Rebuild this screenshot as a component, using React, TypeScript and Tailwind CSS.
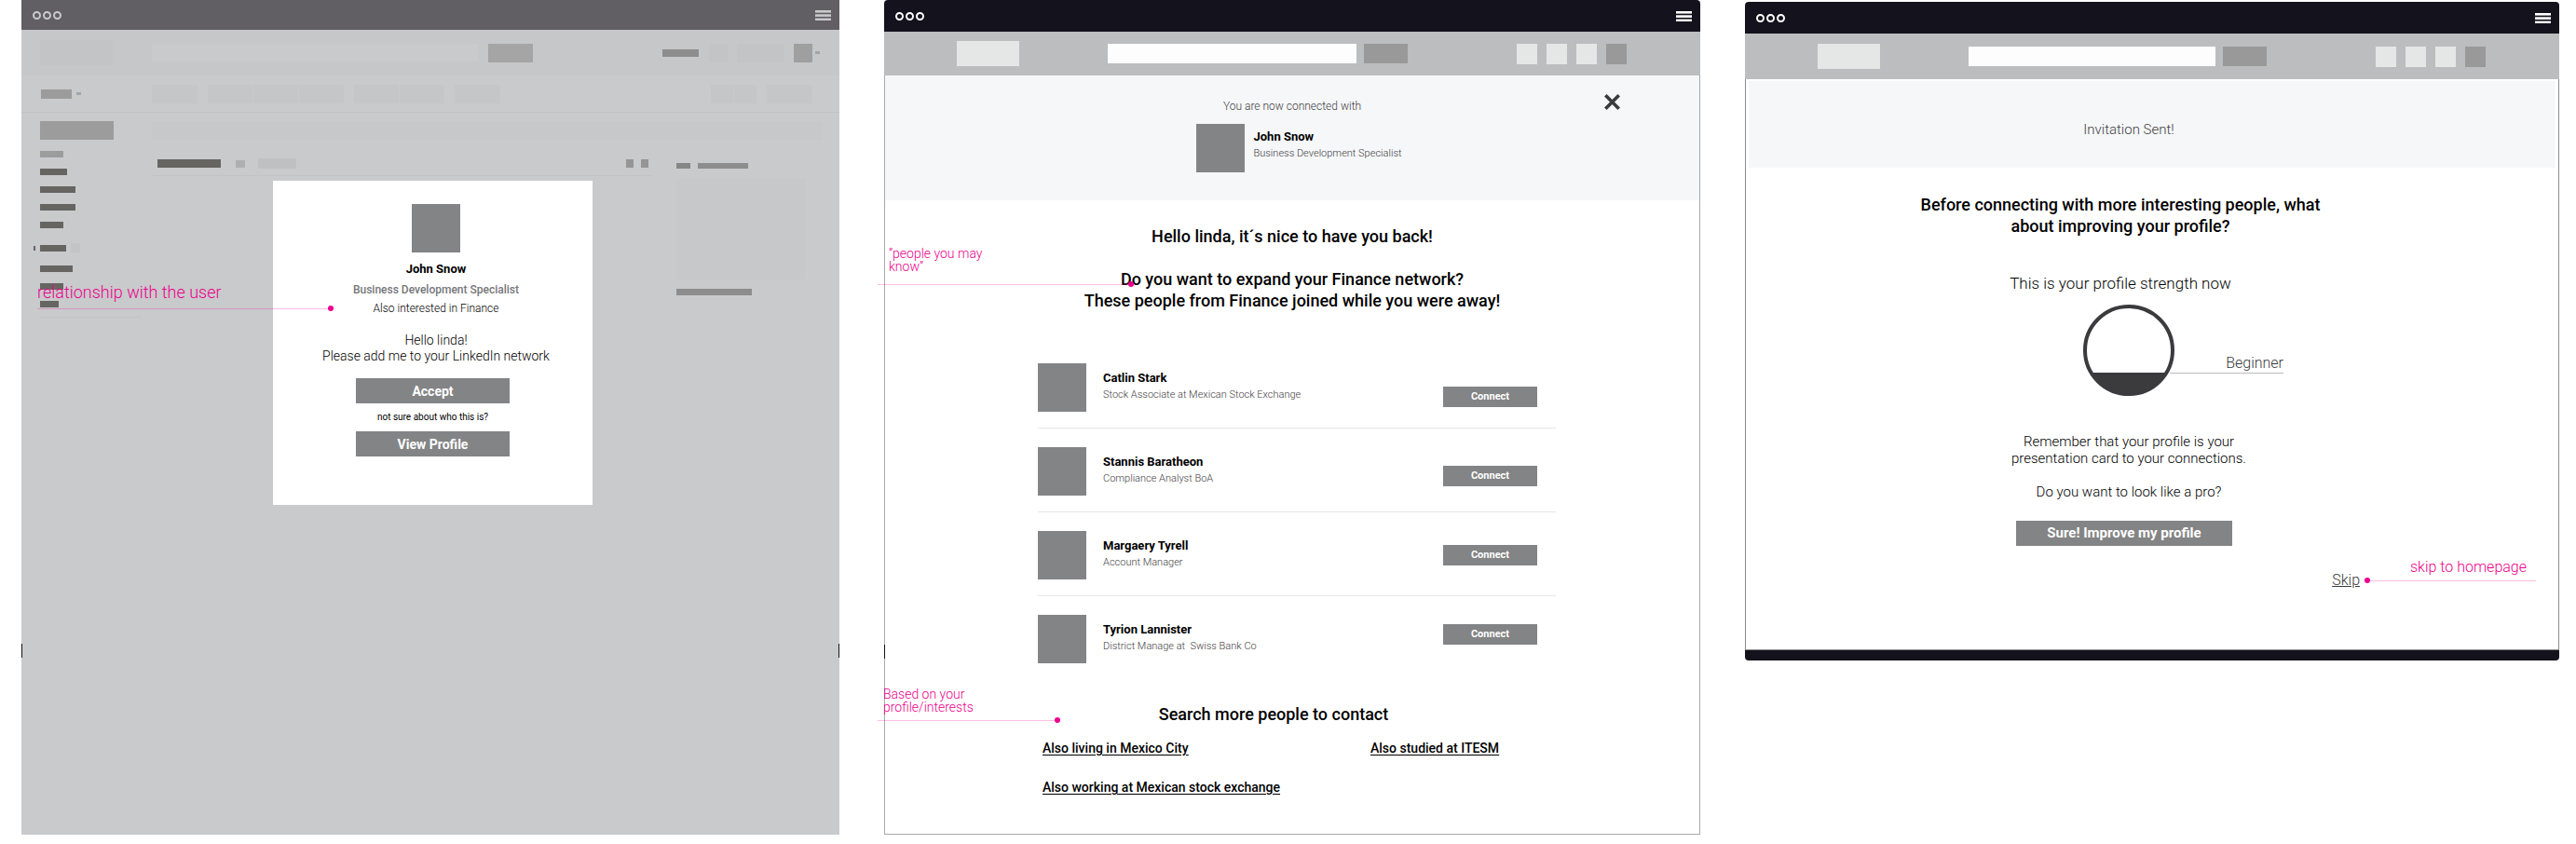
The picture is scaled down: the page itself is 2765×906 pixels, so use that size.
import type { ReactNode } from "react";

function TitleBar({ faded = false, className = "" }: { faded?: boolean; className?: string }) {
  const ink = faded ? "text-[#c9cacc]" : "text-white";
  return (
    <div className={`flex items-center justify-between pl-3 pr-[9px] ${ink} ${className}`}>
      <svg width="31" height="9" viewBox="0 0 31 9" fill="none" stroke="currentColor" strokeWidth="2" aria-hidden="true">
        <circle cx="4.5" cy="4.5" r="3.5" />
        <circle cx="15.5" cy="4.5" r="3.5" />
        <circle cx="26.5" cy="4.5" r="3.5" />
      </svg>
      <button type="button" aria-label="Menu">
        <svg width="17" height="11" viewBox="0 0 17 11" fill="currentColor" aria-hidden="true">
          <rect y="0" width="17" height="2.6" />
          <rect y="4.3" width="17" height="2.6" />
          <rect y="8.6" width="17" height="2.4" />
        </svg>
      </button>
    </div>
  );
}

function SiteHeader({ className = "" }: { className?: string }) {
  return (
    <header className={`flex items-center bg-[#bbbdbf] pl-[78px] pr-[79px] ${className}`}>
      <div className="h-[27px] w-[67px] shrink-0 bg-[#e5e7e6]" />
      <input aria-label="Search" className="ml-[95px] h-[21px] min-w-0 flex-1 bg-[#fdfdfd] px-2 text-xs outline-none" />
      <button type="button" aria-label="Search" className="ml-2 h-[21px] w-[47px] shrink-0 bg-[#999999]" />
      <nav className="ml-[117px] flex shrink-0 gap-2.5" aria-label="Account">
        <div className="size-[22px] bg-[#e5e7e6]" />
        <div className="size-[22px] bg-[#e5e7e6]" />
        <div className="size-[22px] bg-[#e5e7e6]" />
        <div className="size-[22px] bg-[#999999]" />
      </nav>
    </header>
  );
}

function Pointer({ dot }: { dot: "left" | "right" }) {
  return (
    <div className={`flex items-center ${dot === "left" ? "flex-row-reverse" : ""}`}>
      <div className="h-px flex-1 bg-[#ec008c]/25" />
      <div className="size-1.5 rounded-full bg-[#ec008c]" />
    </div>
  );
}

function Note({ className, children }: { className: string; children: ReactNode }) {
  return <div className={`pointer-events-none absolute z-10 font-light text-[#ec008c] ${className}`}>{children}</div>;
}

const sideItems = [
  "w-[25px] bg-[#9c9c9c]",
  "w-[29px] bg-[#666562]",
  "w-[38px] bg-[#666562]",
  "w-[38px] bg-[#666562]",
  "w-[25px] bg-[#666562]",
];

function DimmedPage() {
  return (
    <div aria-hidden="true">
      <div className="flex h-[49px] items-center bg-[#c6c7c9] pl-5 pr-[21px]">
        <div className="h-[27px] w-[78px] bg-[#c3c4c6]" />
        <div className="ml-[42px] h-[19px] w-[350px] bg-[#c9cacc]" />
        <div className="ml-[11px] h-5 w-12 bg-[#a5a5a5]" />
        <div className="ml-auto h-2 w-[39px] bg-[#8d8d8d]" />
        <div className="ml-[11px] size-5 bg-[#c3c4c6]" />
        <div className="ml-2.5 h-5 w-[51px] bg-[#c3c4c6]" />
        <div className="ml-2.5 size-5 bg-[#9f9f9f]" />
        <div className="ml-[3px] h-[3px] w-[5px] bg-[#a5a5a5]" />
      </div>
      <div className="flex h-10 items-center border-b border-[#c2c3c5] pl-[21px] pr-[29px]">
        <div className="h-2.5 w-[33px] bg-[#9c9c9c]" />
        <div className="ml-[5px] h-[3px] w-[5px] bg-[#a5a5a5]" />
        <div className="ml-[76px] h-5 w-[49px] bg-[#c5c6c8]" />
        <div className="ml-[11px] flex gap-px">
          <div className="h-5 w-12 bg-[#c5c6c8]" />
          <div className="h-5 w-12 bg-[#c5c6c8]" />
          <div className="h-5 w-12 bg-[#c5c6c8]" />
        </div>
        <div className="ml-[11px] flex gap-px">
          <div className="h-5 w-12 bg-[#c5c6c8]" />
          <div className="h-5 w-12 bg-[#c5c6c8]" />
        </div>
        <div className="ml-[11px] h-5 w-[49px] bg-[#c5c6c8]" />
        <div className="ml-auto flex gap-px">
          <div className="h-5 w-6 bg-[#c5c6c8]" />
          <div className="h-5 w-6 bg-[#c5c6c8]" />
        </div>
        <div className="ml-[11px] h-5 w-[49px] bg-[#c5c6c8]" />
      </div>
      <div className="flex pl-5 pr-[18px] pt-[9px]">
        <div className="w-[109px]">
          <div className="h-5 w-[79px] bg-[#9c9c9c]" />
          <div className="mt-3 flex flex-col gap-3">
            {sideItems.map((item, i) => (
              <div key={i} className={`h-[7px] ${item}`} />
            ))}
          </div>
          <div className="-ml-[7px] mt-4 flex items-center">
            <div className="h-[5px] w-0.5 bg-[#666562]" />
            <div className="ml-[5px] h-[7px] w-7 bg-[#666562]" />
            <div className="ml-[5px] size-2.5 bg-[#c3c4c6]" />
          </div>
          <div className="mt-[14px] flex flex-col gap-3">
            <div className="h-[7px] w-[35px] bg-[#666562]" />
            <div className="h-[7px] w-[25px] bg-[#666562]" />
            <div className="h-[7px] w-5 bg-[#666562]" />
          </div>
          <div className="mt-2.5 h-px bg-[#c2c3c5]" />
        </div>
        <div className="ml-[11px] flex-1">
          <div className="h-5 bg-[#c7c8ca]" />
          <div className="flex gap-[25px]">
            <div className="mt-[17px] flex h-[22px] flex-1 items-center border-b border-[#c2c3c5] pb-1 pl-1.5 pr-[5px]">
              <div className="h-[9px] w-[68px] bg-[#666562]" />
              <div className="ml-4 h-2 w-2.5 bg-[#aeafb0]" />
              <div className="ml-[14px] h-[11px] w-[41px] bg-[#bfc0c2]" />
              <div className="ml-auto h-[9px] w-2 bg-[#959595]" />
              <div className="ml-2 h-[9px] w-2 bg-[#959595]" />
            </div>
            <div className="w-[157px] pt-[25px]">
              <div className="flex gap-2">
                <div className="h-1.5 w-[15px] bg-[#868686]" />
                <div className="h-1.5 w-[54px] bg-[#8d8d8d]" />
              </div>
              <div className="mt-2.5 h-[109px] w-[138px] bg-[#c7c8ca]" />
              <div className="mt-2.5 h-[7px] w-[81px] bg-[#8d8d8d]" />
            </div>
          </div>
        </div>
      </div>
    </div>
  );
}

function InvitationScreen() {
  return (
    <section className="relative bg-[#c9cacc]">
      <TitleBar faded className="h-8 bg-[#615f64]" />
      <DimmedPage />
      <div className="absolute left-0 top-[691px] h-[15px] w-px bg-[#14121c]" />
      <div className="absolute right-0 top-[691px] h-[15px] w-px bg-[#14121c]" />
      <div className="absolute inset-x-0 top-[194px] flex justify-center pl-[5px]">
        <div role="dialog" aria-label="Invitation" className="flex w-[343px] flex-col items-center bg-white pb-[52px] pt-[25px]">
          <div className="flex flex-col items-center pl-[7px] text-center">
            <div className="size-[52px] bg-[#838485]" />
            <h2 className="mt-2 text-[13px]/5 font-bold">John Snow</h2>
            <p className="mt-0.5 text-xs/5 font-medium text-[#76777a]">Business Development Specialist</p>
            <p className="text-xs/5 font-light">Also interested in Finance</p>
            <p className="mt-4 text-sm/[17px] font-light">
              Hello linda!
              <br />
              Please add me to your LinkedIn network
            </p>
          </div>
          <button type="button" className="mt-[15px] h-[27px] w-[165px] bg-[#838485] text-sm font-bold text-white">
            Accept
          </button>
          <p className="my-2 text-[10px]/[14px]">not sure about who this is?</p>
          <button type="button" className="h-[27px] w-[165px] bg-[#838485] text-sm font-bold text-white">
            View Profile
          </button>
        </div>
      </div>
      <Note className="left-[17px] top-[302px] w-[318px] text-lg/6">
        <p className="mb-0.5">relationship with the user</p>
        <Pointer dot="right" />
      </Note>
    </section>
  );
}

const people = [
  { name: "Catlin Stark", role: "Stock Associate at Mexican Stock Exchange" },
  { name: "Stannis Baratheon", role: "Compliance Analyst BoA" },
  { name: "Margaery Tyrell", role: "Account Manager" },
  { name: "Tyrion Lannister", role: "District Manage at\u00a0 Swiss Bank Co" },
];

function ConnectedScreen() {
  return (
    <section className="relative flex flex-col">
      <TitleBar className="h-[34px] rounded-t bg-[#14121c]" />
      <SiteHeader className="h-[47px]" />
      <div className="flex-1 border border-t-0 border-[#a7a9ac]">
        <div className="relative flex h-[134px] flex-col items-center bg-[#f6f7f9] pt-[23px]">
          <p className="text-xs/5 font-light text-[#3f4042]">You are now connected with</p>
          <div className="mt-[9px] flex gap-2.5 pl-3.5">
            <div className="size-[52px] bg-[#838485]" />
            <div className="pt-1">
              <h3 className="text-[13px]/5 font-bold">John Snow</h3>
              <p className="text-[11px]/4 font-light text-[#3f4042]">Business Development Specialist</p>
            </div>
          </div>
          <button type="button" aria-label="Close" className="absolute right-[85px] top-5">
            <svg width="17" height="17" viewBox="0 0 17 17" stroke="#3b3b3d" strokeWidth="3.6" aria-hidden="true">
              <path d="M1.3 1.3 15.7 15.7M15.7 1.3 1.3 15.7" />
            </svg>
          </button>
        </div>
        <h2 className="pt-[27px] text-center text-lg/[23px] font-medium">
          Hello linda, it´s nice to have you back!
          <br />
          <br />
          Do you want to expand your Finance network?
          <br />
          These people from Finance joined while you were away!
        </h2>
        <div className="mt-14 grid grid-cols-[1fr_101px] pl-[164px] pr-[154px]">
          <ul className="col-span-full col-start-1 row-start-1">
            {people.map((p) => (
              <li
                key={p.name}
                className="flex gap-[18px] border-b border-[#e6e6e7] pb-[17px] pt-5 first:pt-0 last:border-0 last:pb-0"
              >
                <div className="size-[52px] bg-[#838485]" />
                <div className="pt-1.5">
                  <h3 className="text-[13px]/5 font-bold">{p.name}</h3>
                  <p className="text-[11px]/4 font-light text-[#3f4042]">{p.role}</p>
                </div>
              </li>
            ))}
          </ul>
          <div className="col-start-2 row-start-1 -ml-5 mr-5 flex flex-col gap-[63px] pt-[25px]">
            {people.map((p) => (
              <button
                key={p.name}
                type="button"
                aria-label={`Connect with ${p.name}`}
                className="h-[22px] bg-[#838485] text-[11px] font-bold text-white"
              >
                Connect
              </button>
            ))}
          </div>
        </div>
        <h2 className="mt-[43px] pr-10 text-center text-lg/[23px] font-medium">Search more people to contact</h2>
        <div className="mt-[15px] grid grid-cols-[352px_1fr] gap-y-[22px] pb-10 pl-[169px] text-sm/5 font-medium underline underline-offset-2">
          <a href="#mexico-city" className="justify-self-start">Also living in Mexico City</a>
          <a href="#itesm" className="justify-self-start">Also studied at ITESM</a>
          <a href="#stock-exchange" className="justify-self-start">Also working at Mexican stock exchange</a>
        </div>
      </div>
      <div className="absolute left-0 top-[692px] h-[15px] w-px bg-[#14121c]" />
      <Note className="-left-[7px] top-[265px] w-[275px] text-sm/[14px]">
        <p className="mb-[9px] pl-3">
          “people you may
          <br />
          know”
        </p>
        <Pointer dot="right" />
      </Note>
      <Note className="-left-[7px] top-[738px] w-[196px] text-sm/[14px]">
        <p className="mb-1 pl-1.5">
          Based on your
          <br />
          profile/interests
        </p>
        <Pointer dot="right" />
      </Note>
    </section>
  );
}

function ProfileScreen() {
  return (
    <section className="mt-0.5 self-start overflow-hidden rounded border-b-[11px] border-[#14121c]">
      <TitleBar className="h-[34px] bg-[#14121c]" />
      <SiteHeader className="h-[49px]" />
      <div className="flex flex-col items-center border border-t-0 border-[#8a8b8d] pb-16">
        <div className="w-full px-[3px] pt-0.5">
          <p className="bg-[#f6f7f9] pb-[31px] pr-[50px] pt-[42px] text-center text-[15px]/5 font-light text-[#3f4042]">
            Invitation Sent!
          </p>
        </div>
        <div className="flex w-full flex-col items-center pr-[50px] text-center">
          <h2 className="mt-7 pr-[18px] text-lg/[23px] font-medium">
            Before connecting with more interesting people, what
            <br />
            about improving your profile?
          </h2>
          <p className="mt-10 pr-[18px] text-[17px]/5 font-light">This is your profile strength now</p>
          <div className="relative mt-[13px]">
            <svg width="98" height="98" viewBox="0 0 98 98" role="img" aria-label="Profile strength">
              <defs>
                <clipPath id="level">
                  <rect y="73" width="98" height="25" />
                </clipPath>
              </defs>
              <circle cx="49" cy="49" r="47" fill="none" stroke="#3b3b3d" strokeWidth="4" />
              <circle cx="49" cy="49" r="47" fill="#3b3b3d" clipPath="url(#level)" />
            </svg>
            <p className="absolute left-[93px] top-[53px] w-[122px] border-b border-[#bcbcbc] text-right text-base/5 font-light text-[#3b3b3d]">
              Beginner
            </p>
          </div>
          <p className="mt-10 text-[15px]/[18px] font-light">
            Remember that your profile is your
            <br />
            presentation card to your connections.
            <br />
            <br />
            Do you want to look like a pro?
          </p>
        </div>
        <button type="button" className="mr-15 mt-[22px] h-[27px] w-[232px] bg-[#838485] text-[15px] font-bold text-white">
          Sure! Improve my profile
        </button>
        <div className="relative mt-[27px] flex w-full justify-end pr-[213px]">
          <a href="#home" className="text-base/5 font-light text-[#3b3b3d] underline">Skip</a>
          <Note className="-top-[14px] right-6 w-[184px] text-right text-base/5">
            <p className="mb-px pr-2.5">skip to homepage</p>
            <Pointer dot="left" />
          </Note>
        </div>
      </div>
    </section>
  );
}

export default function App() {
  return (
    <main className="grid grid-cols-[878fr_876fr_874fr] gap-12 bg-white pl-[23px] pr-[18px] font-[Roboto,sans-serif] text-black">
      <InvitationScreen />
      <ConnectedScreen />
      <ProfileScreen />
    </main>
  );
}
